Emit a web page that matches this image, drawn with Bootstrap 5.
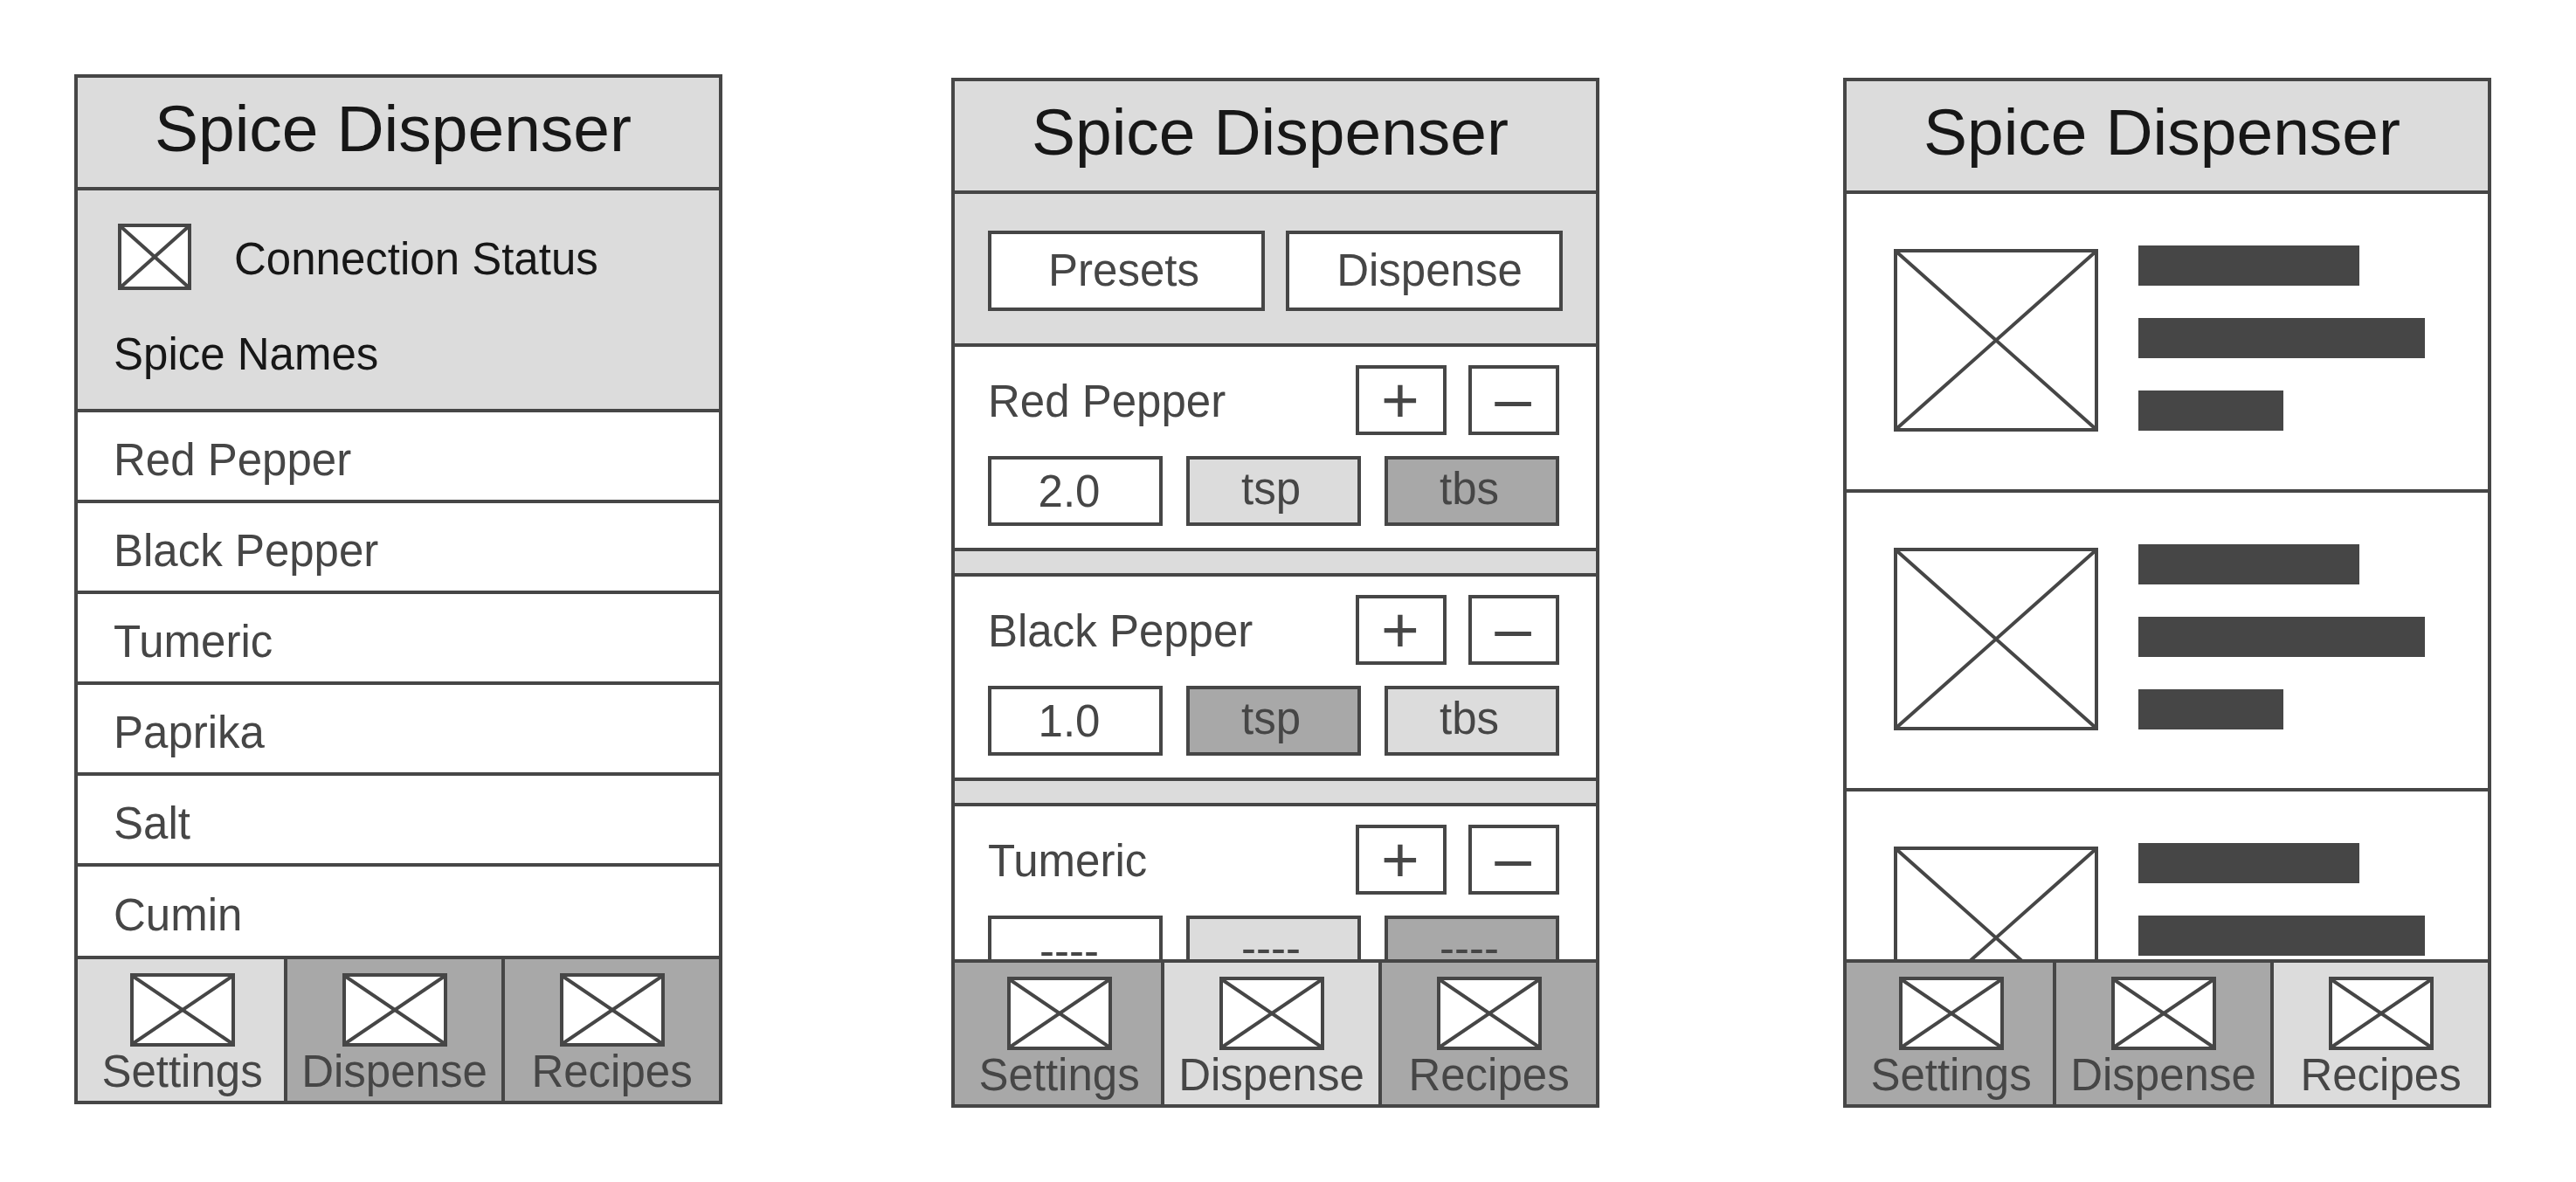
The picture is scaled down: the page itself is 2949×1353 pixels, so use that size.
<!DOCTYPE html>
<html lang="en">
<head>
<meta charset="utf-8">
<meta name="viewport" content="width=device-width, initial-scale=1">
<title>Spice Dispenser</title>
<link href="https://cdn.jsdelivr.net/npm/bootstrap@5.3.0/dist/css/bootstrap.min.css" rel="stylesheet">
<style>
  :root { --ink: #464646; --pale: #dcdcdc; --mid: #a8a8a8; --title: #171717; }
  body { font-family: "Liberation Sans", Arial, sans-serif; font-size: 51px; line-height: 60px; color: var(--ink); background: #fff; }
  a { color: inherit; text-decoration: none; }
  .board { padding: 85px 97px 0 85px; gap: 262px; }
  .phone { flex: 1 1 0; min-width: 0; border: 4px solid var(--ink); }
  .phone-lower { margin-top: 4px; }
  .phone-last { margin-left: 17px; }
  .pale { background: var(--pale); }
  .line-b { border-bottom: 4px solid var(--ink); }
  .app-title { height: 129px; padding: 0 12px 10px 0; color: var(--title); font-size: 75px; line-height: 84px; font-weight: 400; }
  .screen { height: 876px; }

  .xbox { display: block; flex: none; border: 4px solid var(--ink); background: #fff; }
  .xbox line { stroke: var(--ink); stroke-width: 4px; vector-effect: non-scaling-stroke; }
  .xbox-status { width: 84px; height: 76px; }
  .xbox-tab { width: 120px; height: 84px; }
  .xbox-recipe { width: 234px; height: 209px; margin-top: 4px; }

  .status-panel { height: 254px; padding: 38px 41px 0; color: var(--title); flex: none; }
  .status-row { gap: 49px; padding-left: 5px; margin-bottom: 44px; }
  .status-row span { padding-top: 6px; }
  .panel-heading { font-size: 51px; line-height: 60px; font-weight: 400; }
  .spice-row { height: 104px; padding: 10px 41px 0; flex: none; }
  .spice-row:last-child { height: auto; flex: 1; border-bottom: 0; }

  .tab { padding-top: 16px; height: 162px; line-height: 50px; background: var(--mid); }
  .tab + .tab { border-left: 4px solid var(--ink); }
  .tab.active { background: var(--pale); }
  .tab-a { flex: 234 1 0; padding-left: 3px; }
  .tab-b { flex: 246 1 0; }
  .tab .xbox { margin-bottom: 4px; }
  .tabs { border-top: 4px solid var(--ink); }

  .box-btn { border: 4px solid var(--ink); border-radius: 0; background: #fff; color: var(--ink); padding: 0; font-size: 51px; line-height: 60px; }
  .toolbar { height: 175px; padding: 42px 38px 0; gap: 24px; grid-template-columns: 1fr 1fr; }
  .toolbar .box-btn { height: 92px; padding-right: 6px; }
  .toolbar .go { padding: 0 0 0 12px; }
  .dose { padding: 21px 42px 25px 38px; }
  .dose-head { gap: 25px; margin-bottom: 24px; }
  .dose-name { font-weight: 400; font-size: 51px; line-height: 60px; padding-top: 3px; }
  .sign { width: 104px; height: 80px; font-size: 75px; line-height: 72px; padding-right: 2px; }
  .minus { padding-bottom: 6px; line-height: 66px; }
  .dose-row { gap: 27px; grid-template-columns: 1fr 1fr 1fr; }
  .dose-row > * { height: 80px; min-width: 0; text-align: center; }
  .dose-row input { padding-right: 14px; outline: 0; }
  .unit { background: var(--pale); padding: 0 6px 4px 0; }
  .unit.on { background: var(--mid); }
  .stripe { height: 29px; }

  .recipe { height: 342px; padding: 59px 0 0 54px; gap: 46px; }
  .bars { gap: 37px; }
  .bar { height: 46px; background: var(--ink); }
  .bar-m { width: 253px; }
  .bar-l { width: 328px; }
  .bar-s { width: 166px; }
</style>
</head>
<body>
<main class="board d-flex align-items-start">

  <section class="phone">
    <h1 class="app-title pale line-b m-0 d-flex align-items-center justify-content-center">Spice Dispenser</h1>
    <div class="screen d-flex flex-column overflow-hidden">
      <div class="status-panel pale line-b">
        <div class="status-row d-flex align-items-center">
          <svg class="xbox xbox-status" viewBox="0 0 100 100" preserveAspectRatio="none"><line x1="0" y1="0" x2="100" y2="100"/><line x1="100" y1="0" x2="0" y2="100"/></svg>
          <span>Connection Status</span>
        </div>
        <h2 class="panel-heading m-0">Spice Names</h2>
      </div>
      <ul class="list-unstyled m-0 d-flex flex-column flex-grow-1">
        <li class="spice-row line-b d-flex align-items-center">Red Pepper</li>
        <li class="spice-row line-b d-flex align-items-center">Black Pepper</li>
        <li class="spice-row line-b d-flex align-items-center">Tumeric</li>
        <li class="spice-row line-b d-flex align-items-center">Paprika</li>
        <li class="spice-row line-b d-flex align-items-center">Salt</li>
        <li class="spice-row line-b d-flex align-items-center">Cumin</li>
      </ul>
    </div>
    <nav class="tabs d-flex">
      <a href="#" class="tab tab-a active d-flex flex-column align-items-center"><svg class="xbox xbox-tab" viewBox="0 0 100 100" preserveAspectRatio="none"><line x1="0" y1="0" x2="100" y2="100"/><line x1="100" y1="0" x2="0" y2="100"/></svg>Settings</a>
      <a href="#" class="tab tab-b d-flex flex-column align-items-center"><svg class="xbox xbox-tab" viewBox="0 0 100 100" preserveAspectRatio="none"><line x1="0" y1="0" x2="100" y2="100"/><line x1="100" y1="0" x2="0" y2="100"/></svg>Dispense</a>
      <a href="#" class="tab tab-b d-flex flex-column align-items-center"><svg class="xbox xbox-tab" viewBox="0 0 100 100" preserveAspectRatio="none"><line x1="0" y1="0" x2="100" y2="100"/><line x1="100" y1="0" x2="0" y2="100"/></svg>Recipes</a>
    </nav>
  </section>

  <section class="phone phone-lower">
    <h1 class="app-title pale line-b m-0 d-flex align-items-center justify-content-center">Spice Dispenser</h1>
    <div class="screen overflow-hidden">
      <div class="toolbar pale line-b d-grid">
        <button type="button" class="box-btn">Presets</button>
        <button type="button" class="box-btn go">Dispense</button>
      </div>
      <div class="dose line-b">
        <div class="dose-head d-flex align-items-center">
          <label class="dose-name me-auto" for="red">Red Pepper</label>
          <button type="button" class="box-btn sign">+</button>
          <button type="button" class="box-btn sign minus">–</button>
        </div>
        <div class="dose-row d-grid">
          <input id="red" class="box-btn" type="text" value="2.0">
          <button type="button" class="box-btn unit">tsp</button>
          <button type="button" class="box-btn unit on">tbs</button>
        </div>
      </div>
      <div class="stripe pale line-b"></div>
      <div class="dose line-b">
        <div class="dose-head d-flex align-items-center">
          <label class="dose-name me-auto" for="black">Black Pepper</label>
          <button type="button" class="box-btn sign">+</button>
          <button type="button" class="box-btn sign minus">–</button>
        </div>
        <div class="dose-row d-grid">
          <input id="black" class="box-btn" type="text" value="1.0">
          <button type="button" class="box-btn unit on">tsp</button>
          <button type="button" class="box-btn unit">tbs</button>
        </div>
      </div>
      <div class="stripe pale line-b"></div>
      <div class="dose line-b">
        <div class="dose-head d-flex align-items-center">
          <label class="dose-name me-auto" for="tumeric">Tumeric</label>
          <button type="button" class="box-btn sign">+</button>
          <button type="button" class="box-btn sign minus">–</button>
        </div>
        <div class="dose-row d-grid">
          <input id="tumeric" class="box-btn" type="text" value="----">
          <button type="button" class="box-btn unit">----</button>
          <button type="button" class="box-btn unit on">----</button>
        </div>
      </div>
    </div>
    <nav class="tabs d-flex">
      <a href="#" class="tab tab-a d-flex flex-column align-items-center"><svg class="xbox xbox-tab" viewBox="0 0 100 100" preserveAspectRatio="none"><line x1="0" y1="0" x2="100" y2="100"/><line x1="100" y1="0" x2="0" y2="100"/></svg>Settings</a>
      <a href="#" class="tab tab-b active d-flex flex-column align-items-center"><svg class="xbox xbox-tab" viewBox="0 0 100 100" preserveAspectRatio="none"><line x1="0" y1="0" x2="100" y2="100"/><line x1="100" y1="0" x2="0" y2="100"/></svg>Dispense</a>
      <a href="#" class="tab tab-b d-flex flex-column align-items-center"><svg class="xbox xbox-tab" viewBox="0 0 100 100" preserveAspectRatio="none"><line x1="0" y1="0" x2="100" y2="100"/><line x1="100" y1="0" x2="0" y2="100"/></svg>Recipes</a>
    </nav>
  </section>

  <section class="phone phone-lower phone-last">
    <h1 class="app-title pale line-b m-0 d-flex align-items-center justify-content-center">Spice Dispenser</h1>
    <div class="screen overflow-hidden">
      <article class="recipe line-b d-flex align-items-start">
        <svg class="xbox xbox-recipe" viewBox="0 0 100 100" preserveAspectRatio="none"><line x1="0" y1="0" x2="100" y2="100"/><line x1="100" y1="0" x2="0" y2="100"/></svg>
        <div class="bars d-flex flex-column"><div class="bar bar-m"></div><div class="bar bar-l"></div><div class="bar bar-s"></div></div>
      </article>
      <article class="recipe line-b d-flex align-items-start">
        <svg class="xbox xbox-recipe" viewBox="0 0 100 100" preserveAspectRatio="none"><line x1="0" y1="0" x2="100" y2="100"/><line x1="100" y1="0" x2="0" y2="100"/></svg>
        <div class="bars d-flex flex-column"><div class="bar bar-m"></div><div class="bar bar-l"></div><div class="bar bar-s"></div></div>
      </article>
      <article class="recipe line-b d-flex align-items-start">
        <svg class="xbox xbox-recipe" viewBox="0 0 100 100" preserveAspectRatio="none"><line x1="0" y1="0" x2="100" y2="100"/><line x1="100" y1="0" x2="0" y2="100"/></svg>
        <div class="bars d-flex flex-column"><div class="bar bar-m"></div><div class="bar bar-l"></div><div class="bar bar-s"></div></div>
      </article>
    </div>
    <nav class="tabs d-flex">
      <a href="#" class="tab tab-a d-flex flex-column align-items-center"><svg class="xbox xbox-tab" viewBox="0 0 100 100" preserveAspectRatio="none"><line x1="0" y1="0" x2="100" y2="100"/><line x1="100" y1="0" x2="0" y2="100"/></svg>Settings</a>
      <a href="#" class="tab tab-b d-flex flex-column align-items-center"><svg class="xbox xbox-tab" viewBox="0 0 100 100" preserveAspectRatio="none"><line x1="0" y1="0" x2="100" y2="100"/><line x1="100" y1="0" x2="0" y2="100"/></svg>Dispense</a>
      <a href="#" class="tab tab-b active d-flex flex-column align-items-center"><svg class="xbox xbox-tab" viewBox="0 0 100 100" preserveAspectRatio="none"><line x1="0" y1="0" x2="100" y2="100"/><line x1="100" y1="0" x2="0" y2="100"/></svg>Recipes</a>
    </nav>
  </section>
</main>
<script src="https://cdn.jsdelivr.net/npm/bootstrap@5.3.0/dist/js/bootstrap.bundle.min.js"></script>
</body>
</html>
